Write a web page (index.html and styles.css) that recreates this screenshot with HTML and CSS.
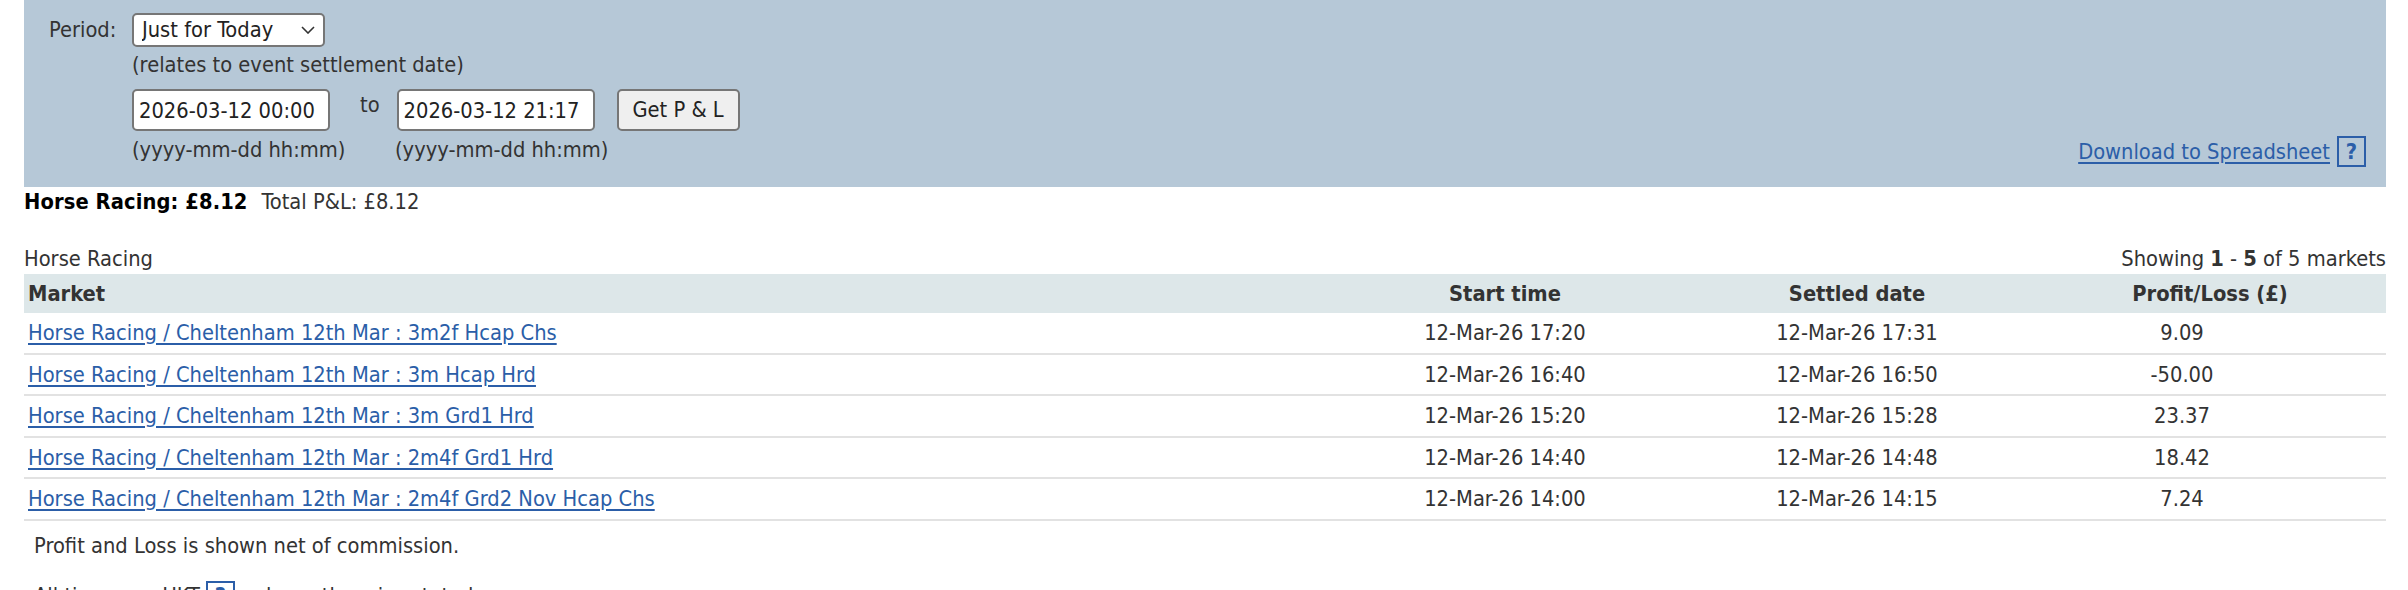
FILE: index.html
```html
<!DOCTYPE html>
<html lang="en">
<head>
<meta charset="utf-8">
<title>Profit and Loss</title>
<link rel="stylesheet" href="styles.css">
</head>
<body>
<div class="page">
  <div class="filter">
    <div class="form">
      <div class="label">Period:</div>
      <div class="controls">
        <div class="select-wrap">
          <select class="select"><option>Just for Today</option></select>
          <svg class="chev" width="14" height="8" viewBox="0 0 14 8"><path d="M1 1 L7 7 L13 1" fill="none" stroke="#333" stroke-width="1.6"/></svg>
        </div>
        <div class="note">(relates to event settlement date)</div>
        <div class="dates">
          <input class="date" type="text" value="2026-03-12 00:00">
          <span class="to">to</span>
          <input class="date" type="text" value="2026-03-12 21:17">
          <button class="btn" type="button">Get P &amp; L</button>
        </div>
        <div class="hints">
          <span class="hint first">(yyyy-mm-dd hh:mm)</span>
          <span class="hint">(yyyy-mm-dd hh:mm)</span>
        </div>
      </div>
    </div>
    <div class="download">
      <a class="link" href="#">Download to Spreadsheet</a>
      <span class="help">?</span>
    </div>
  </div>

  <div class="summary"><b class="sum-bold">Horse Racing: £8.12</b><span class="sum-total">Total P&amp;L: £8.12</span></div>

  <div class="caption">
    <span>Horse Racing</span>
    <span>Showing <b>1</b> - <b>5</b> of 5 markets</span>
  </div>

  <table class="markets">
    <colgroup>
      <col class="col-market">
      <col class="col-start">
      <col class="col-settled">
      <col class="col-pl">
    </colgroup>
    <thead>
      <tr><th class="c-market">Market</th><th>Start time</th><th>Settled date</th><th>Profit/Loss (£)</th></tr>
    </thead>
    <tbody>
      <tr><td class="c-market"><a class="link" href="#">Horse Racing / Cheltenham 12th Mar : 3m2f Hcap Chs</a></td><td>12-Mar-26 17:20</td><td>12-Mar-26 17:31</td><td class="c-pl">9.09</td></tr>
      <tr><td class="c-market"><a class="link" href="#">Horse Racing / Cheltenham 12th Mar : 3m Hcap Hrd</a></td><td>12-Mar-26 16:40</td><td>12-Mar-26 16:50</td><td class="c-pl">-50.00</td></tr>
      <tr><td class="c-market"><a class="link" href="#">Horse Racing / Cheltenham 12th Mar : 3m Grd1 Hrd</a></td><td>12-Mar-26 15:20</td><td>12-Mar-26 15:28</td><td class="c-pl">23.37</td></tr>
      <tr><td class="c-market"><a class="link" href="#">Horse Racing / Cheltenham 12th Mar : 2m4f Grd1 Hrd</a></td><td>12-Mar-26 14:40</td><td>12-Mar-26 14:48</td><td class="c-pl">18.42</td></tr>
      <tr><td class="c-market"><a class="link" href="#">Horse Racing / Cheltenham 12th Mar : 2m4f Grd2 Nov Hcap Chs</a></td><td>12-Mar-26 14:00</td><td>12-Mar-26 14:15</td><td class="c-pl">7.24</td></tr>
    </tbody>
  </table>

  <p class="foot">Profit and Loss is shown net of commission.</p>
  <p class="foot second">All times are UKT <span class="help">?</span> unless otherwise stated.</p>
</div>
</body>
</html>
```
FILE: styles.css
```css
html, body {
  margin: 0;
  padding: 0;
  background: #ffffff;
}
body {
  font-family: "DejaVu Sans", "Liberation Sans", sans-serif;
  font-stretch: condensed;
  font-size: 21.7px;
  line-height: 26px;
  color: #333333;
}
.page {
  margin: 0 22px 0 24px;
}

/* filter panel */
.filter {
  background: #b6c8d7;
  display: flex;
  justify-content: space-between;
  align-items: flex-end;
  padding: 13px 20px 24px 25px;
}
.form {
  display: flex;
}
.label {
  flex: 0 0 83px;
  line-height: 34px;
}
.controls {
  display: flex;
  flex-direction: column;
  align-items: flex-start;
}
.select-wrap {
  position: relative;
  width: 193px;
  height: 34px;
}
.select {
  appearance: none;
  -webkit-appearance: none;
  box-sizing: border-box;
  width: 193px;
  height: 34px;
  margin: 0;
  padding: 0 0 0 8px;
  border: 2px solid #767676;
  border-radius: 5px;
  background: #ffffff;
  font: inherit;
  font-stretch: condensed;
  line-height: 30px;
  color: #222222;
}
.chev {
  position: absolute;
  right: 10px;
  top: 13px;
  pointer-events: none;
}
.note {
  margin-top: 5px;
}
.dates {
  display: flex;
  align-items: flex-start;
  margin-top: 11px;
}
.date {
  box-sizing: border-box;
  width: 198px;
  height: 42px;
  margin: 0;
  padding: 0 5px;
  border: 2px solid #767676;
  border-radius: 5px;
  background: #ffffff;
  font: inherit;
  font-stretch: condensed;
  color: #222222;
}
.to {
  margin: 3px 17px 0 30px;
}
.btn {
  box-sizing: border-box;
  width: 123px;
  height: 42px;
  margin: 0 0 0 22px;
  padding: 0;
  border: 2px solid #767676;
  border-radius: 5px;
  background: #efefef;
  font: inherit;
  font-stretch: condensed;
  color: #222222;
}
.hints {
  display: flex;
  margin-top: 6px;
}
.hint.first {
  width: 263px;
}

.download {
  display: flex;
  align-items: center;
  gap: 7px;
  margin-bottom: -4px;
}
.link {
  color: #2b5ea8;
  text-decoration: underline;
  text-underline-offset: 3px;
}
.help {
  display: inline-flex;
  justify-content: center;
  align-items: center;
  box-sizing: border-box;
  width: 29px;
  height: 31px;
  border: 2px solid #2b5ea8;
  color: #2b5ea8;
  font-weight: bold;
  line-height: 1;
}

/* summary */
.summary {
  margin-top: 2px;
  color: #000000;
}
.sum-bold {
  font-weight: bold;
  letter-spacing: 0.1px;
}
.sum-total {
  margin-left: 14px;
  color: #333333;
}
.caption {
  display: flex;
  justify-content: space-between;
  margin-top: 31px;
  color: #333333;
}
.caption b {
  font-weight: bold;
}

/* table */
.markets {
  width: 100%;
  margin-top: 2px;
  border-collapse: collapse;
  border-spacing: 0;
  table-layout: fixed;
}
.col-start { width: 350px; }
.col-settled { width: 354px; }
.col-pl { width: 352px; }
.markets th {
  background: #dde7e9;
  font-weight: bold;
  color: #333333;
  line-height: 25px;
  padding: 7px 4px;
  text-align: center;
}
.markets th.c-market {
  text-align: left;
}
.markets td {
  line-height: 25.5px;
  padding: 7px 4px;
  border-bottom: 2px solid #e2e2e2;
  text-align: center;
  white-space: nowrap;
}
.markets td.c-market {
  text-align: left;
}
.markets td.c-pl {
  padding-right: 60px;
}

.foot {
  margin: 12px 0 0 10px;
}
.foot.second {
  margin-top: 22px;
}
.foot .help {
  vertical-align: middle;
}
```
